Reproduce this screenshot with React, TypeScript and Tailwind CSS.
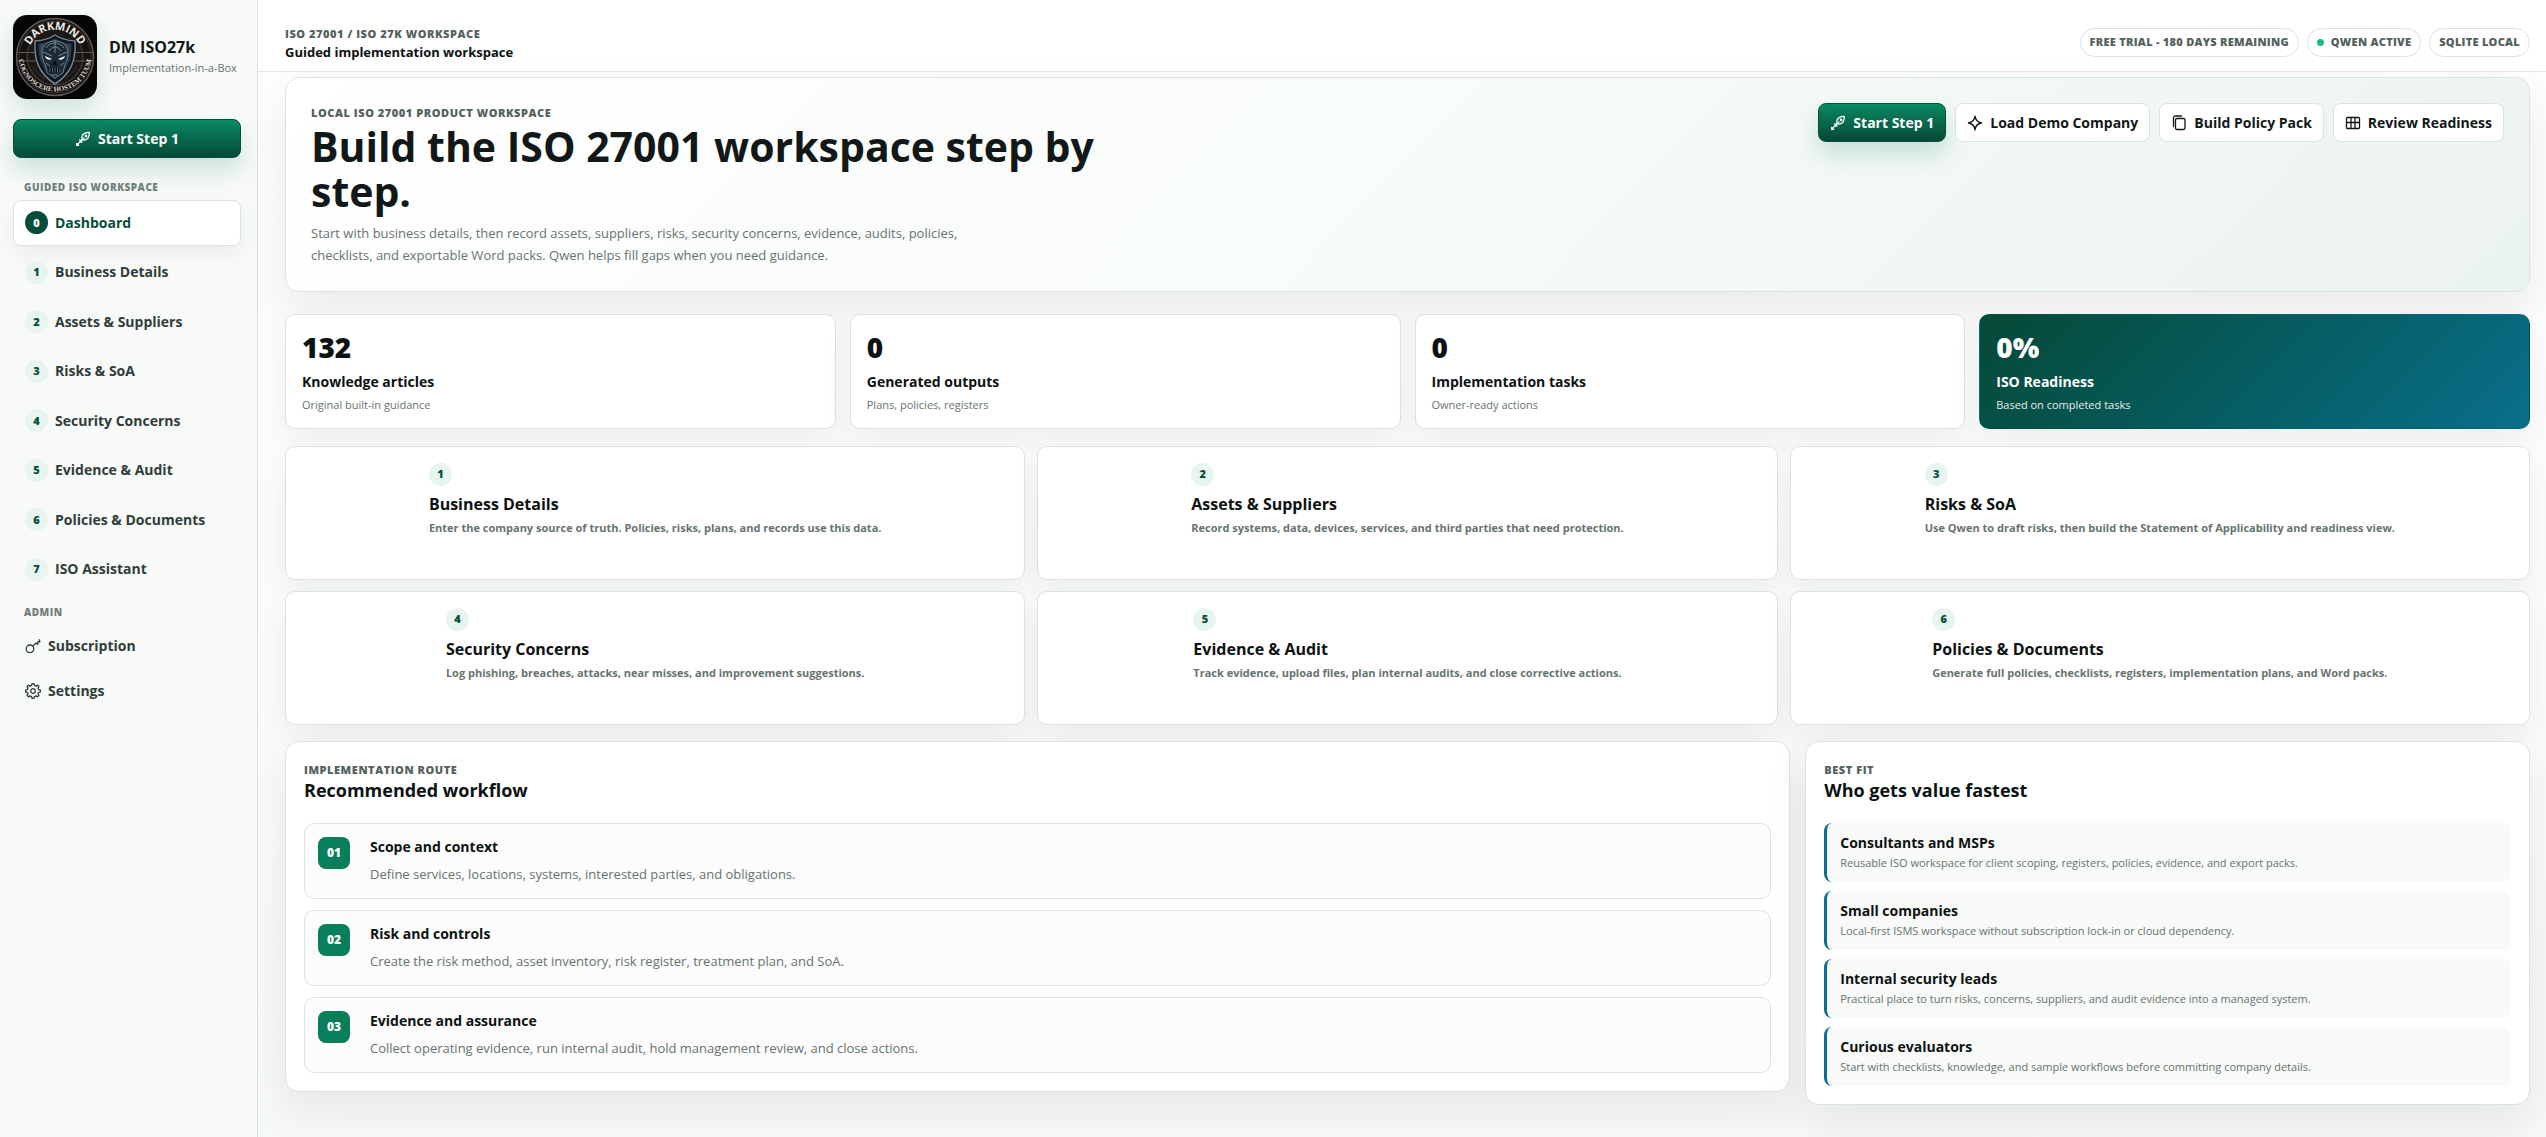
import type { ReactNode } from 'react'
import clsx from 'clsx'

const navItems = [
  'Dashboard',
  'Business Details',
  'Assets & Suppliers',
  'Risks & SoA',
  'Security Concerns',
  'Evidence & Audit',
  'Policies & Documents',
  'ISO Assistant',
]

const stats = [
  { value: '132', label: 'Knowledge articles', note: 'Original built-in guidance' },
  { value: '0', label: 'Generated outputs', note: 'Plans, policies, registers' },
  { value: '0', label: 'Implementation tasks', note: 'Owner-ready actions' },
  { value: '0%', label: 'ISO Readiness', note: 'Based on completed tasks', accent: true },
]

const steps = [
  { title: 'Business Details', text: 'Enter the company source of truth. Policies, risks, plans, and records use this data.' },
  { title: 'Assets & Suppliers', text: 'Record systems, data, devices, services, and third parties that need protection.' },
  { title: 'Risks & SoA', text: 'Use Qwen to draft risks, then build the Statement of Applicability and readiness view.' },
  { title: 'Security Concerns', text: 'Log phishing, breaches, attacks, near misses, and improvement suggestions.' },
  { title: 'Evidence & Audit', text: 'Track evidence, upload files, plan internal audits, and close corrective actions.' },
  { title: 'Policies & Documents', text: 'Generate full policies, checklists, registers, implementation plans, and Word packs.' },
]

const workflow = [
  { title: 'Scope and context', text: 'Define services, locations, systems, interested parties, and obligations.' },
  { title: 'Risk and controls', text: 'Create the risk method, asset inventory, risk register, treatment plan, and SoA.' },
  { title: 'Evidence and assurance', text: 'Collect operating evidence, run internal audit, hold management review, and close actions.' },
]

const audiences = [
  { title: 'Consultants and MSPs', text: 'Reusable ISO workspace for client scoping, registers, policies, evidence, and export packs.' },
  { title: 'Small companies', text: 'Local-first ISMS workspace without subscription lock-in or cloud dependency.' },
  { title: 'Internal security leads', text: 'Practical place to turn risks, concerns, suppliers, and audit evidence into a managed system.' },
  { title: 'Curious evaluators', text: 'Start with checklists, knowledge, and sample workflows before committing company details.' },
]

function Icon({ children }: { children: ReactNode }) {
  return (
    <svg
      viewBox="0 0 16 16"
      className="size-4 shrink-0"
      fill="none"
      stroke="currentColor"
      strokeWidth="1.3"
      strokeLinecap="round"
      strokeLinejoin="round"
      aria-hidden="true"
    >
      {children}
    </svg>
  )
}

function LaunchIcon() {
  return (
    <Icon>
      <path d="M14.3 1.4C10.400 1.500 7.800 2.600 7 5.200c-.3 1-.2 2 .1 3.600 1.700.3 2.700.3 3.700-.1 2.600-1 3.500-3.600 3.500-7.300z" />
      <circle cx="11" cy="4.900" r=".7" />
      <path d="M9 6.900 3 12.900M4.800 8.700l.3 2M5 10.900l2 .2" />
      <path d="M1.700 14.400v-2l1.900 1.900z" fill="currentColor" />
    </Icon>
  )
}

function SparkIcon() {
  return (
    <Icon>
      <path d="M8 1.2c.5 4 2.3 6.2 6.6 6.8-4.300.6-6.100 2.800-6.600 6.800-.5-4-2.300-6.200-6.600-6.800C5.700 7.400 7.500 5.200 8 1.200z" />
    </Icon>
  )
}

function PackIcon() {
  return (
    <Icon>
      <rect x="4.5" y="3.5" width="9.5" height="11" rx="1.5" />
      <path d="M2.5 11.5V3a2 2 0 0 1 2-2h6" />
    </Icon>
  )
}

function GridIcon() {
  return (
    <Icon>
      <rect x="1.5" y="2.5" width="13" height="11" rx="1" />
      <path d="M1.5 7.5h13M6 2.5v11M10 2.5v11" />
    </Icon>
  )
}

function KeyIcon() {
  return (
    <Icon>
      <circle cx="5" cy="10.8" r="3.8" />
      <path d="M7.8 8.1 11 5l1.7 1.3.4-2.7 1.8.2-.7-2" />
    </Icon>
  )
}

// eight teeth, each one drawn as two outer and two inner points
const gearPoints = Array.from({ length: 8 }, (_, i) =>
  [[-14, 5.7], [-8, 7.4], [8, 7.4], [14, 5.7]].map(([offset, r]) => {
    const a = ((i * 45 + offset) * Math.PI) / 180
    return `${(8 + r * Math.cos(a)).toFixed(2)},${(8 + r * Math.sin(a)).toFixed(2)}`
  }),
).flat().join(' ')

function GearIcon() {
  return (
    <Icon>
      <polygon points={gearPoints} />
      <circle cx="8" cy="8" r="2.3" />
    </Icon>
  )
}

function Logo() {
  return (
    <svg
      viewBox="0 0 84 84"
      role="img"
      aria-label="Darkmind"
      className="size-[84px] shrink-0 rounded-[14px] shadow-[0_10px_24px_rgba(8,127,91,0.18)]"
    >
      <defs>
        <path id="logo-top" d="M15 37a27.500 27.500 0 0 1 54 0" />
        <path id="logo-bottom" d="M6 46a36.500 36.500 0 0 0 72 0" />
        <linearGradient id="logo-shield" x1="0" y1="0" x2="0" y2="1">
          <stop offset="0" stopColor="#3a4d5c" />
          <stop offset="1" stopColor="#15202a" />
        </linearGradient>
      </defs>
      <rect width="84" height="84" fill="#050505" />
      <circle cx="42" cy="42" r="38.5" fill="#15110f" stroke="#5d5a57" strokeWidth="1.5" />
      <circle cx="42" cy="42" r="36" fill="none" stroke="#2c2927" strokeWidth="1.5" />
      <circle cx="42" cy="42" r="28" fill="#1b1715" stroke="#4b4744" />
      <path d="M4 37.5h19M61 37.5h19M4 46h19M61 46h19" stroke="#5d5a57" />
      <path d="M18 54c3 7 9 12 16 15M66 54c-3 7-9 12-16 15M20 51c3 6 7 10 12 13M64 51c-3 6-7 10-12 13" fill="none" stroke="#3d3835" />
      <path d="M42 20c6 4 12 5.5 20 6 1 18-3 32-20 43-17-11-21-25-20-43 8-.5 14-2 20-6z" fill="#0d151c" stroke="#6f8592" strokeWidth="1.5" />
      <path d="M42 24c5 3 10 4.500 16 5 .5 14-3 26-16 35-13-9-16.500-21-16-35 6-.5 11-2 16-5z" fill="url(#logo-shield)" stroke="#2a3a46" />
      <path d="M29 38c0-8 6-12 13-12s13 4 13 12c0 4-1 8-3 11l-2 9-8 5-8-5-2-9c-2-3-3-7-3-11z" fill="#1d2b36" stroke="#8ba0ad" strokeWidth=".7" />
      <path d="M33 33c3-4 6-5 9-5s6 1 9 5M36 36c2-3 4-4 6-4s4 1 6 4M42 26v12M30 37l9 4M54 37l-9 4" fill="none" stroke="#7c929f" strokeWidth=".9" />
      <path d="m32 41 7 3c-2.500 1.500-6 .8-7-3zM52 41l-7 3c2.500 1.500 6 .8 7-3z" fill="#fff" />
      <path d="m42 45-2 5h4zM35 53h14l-2 4H37z" fill="#05090c" />
      <path d="M37 53v4M39.5 53v4M42 53v4M44.5 53v4M47 53v4M33 48l4 3M51 48l-4 3M39 60h6" stroke="#8ba0ad" strokeWidth=".7" />
      <text fill="#ece8e2" fontSize="11" fontWeight="700" className="font-['Open_Sans',sans-serif]">
        <textPath href="#logo-top" startOffset="50%" textAnchor="middle">DARKMIND</textPath>
      </text>
      <text fill="#ddd8d1" fontSize="7" fontWeight="700" className="font-['Liberation_Serif',serif]">
        <textPath href="#logo-bottom" startOffset="50%" textAnchor="middle">COGNOSCERE HOSTEM TUUM</textPath>
      </text>
    </svg>
  )
}

function Button({ primary, className, children }: { primary?: boolean; className?: string; children: ReactNode }) {
  return (
    <button
      type="button"
      className={clsx(
        'flex h-[39px] items-center justify-center gap-[7px] rounded-lg border px-[11px] text-sm font-bold',
        primary
          ? 'border-[#064e3b] bg-linear-to-b from-[#0a8a63] to-[#064936] text-white shadow-[0_12px_24px_rgba(8,127,91,0.2)]'
          : 'border-[#d9e3df] bg-white text-[#111817]',
        className,
      )}
    >
      {children}
    </button>
  )
}

function Chip({ children }: { children: ReactNode }) {
  return (
    <span className="flex h-[29px] items-center gap-[7px] rounded-full border border-[#d9e3df] bg-white px-[9px] text-[11px] font-extrabold tracking-wide text-[#52615c]">
      {children}
    </span>
  )
}

function Eyebrow({ children }: { children: ReactNode }) {
  return <p className="text-[11px] leading-5 font-extrabold tracking-wider text-[#52615c] uppercase">{children}</p>
}

function NumberBadge({ n, active }: { n: number; active?: boolean }) {
  return (
    <span
      className={clsx(
        'flex size-[23px] shrink-0 items-center justify-center rounded-full text-[11px] font-extrabold',
        active ? 'bg-[#064e3b] text-white' : 'bg-[#e7f4ef] text-[#064e3b]',
      )}
    >
      {n}
    </span>
  )
}

function Sidebar() {
  return (
    <aside className="w-[258px] shrink-0 border-r border-[#d9e3df] bg-[#f8faf8] pt-[15px] pr-4 pl-[13px]">
      <div className="flex items-center gap-3">
        <Logo />
        <div className="whitespace-nowrap">
          <p className="text-base leading-[22px] font-bold text-[#111817]">DM ISO27k</p>
          <p className="text-[11px] leading-5 text-[#66736f]">Implementation-in-a-Box</p>
        </div>
      </div>

      <Button primary className="mt-5 w-full">
        <LaunchIcon /> Start Step 1
      </Button>

      <p className="mt-[21px] pl-[11px] text-[10px] leading-4 font-extrabold tracking-wider text-[#6f807a]">GUIDED ISO WORKSPACE</p>
      <nav className="mt-[5px] grid h-[392px] auto-rows-fr gap-1">
        {navItems.map((item, i) => (
          <a
            key={item}
            href="#"
            className={clsx(
              'flex items-center gap-[7px] rounded-lg border px-[11px] text-sm font-bold',
              i === 0
                ? 'border-[#d9e3df] bg-white text-[#064e3b] shadow-[0_8px_20px_rgba(20,40,32,0.06)]'
                : 'border-transparent text-[#2f3d39]',
            )}
          >
            <NumberBadge n={i} active={i === 0} />
            {item}
          </a>
        ))}
      </nav>

      <p className="mt-3 pl-[11px] text-[10px] leading-4 font-extrabold tracking-wider text-[#6f807a]">ADMIN</p>
      <nav className="mt-[5px] grid gap-1 text-sm font-bold text-[#2f3d39]">
        <a href="#" className="flex h-[41px] items-center gap-[7px] px-3">
          <KeyIcon /> Subscription
        </a>
        <a href="#" className="flex h-[41px] items-center gap-[7px] px-3">
          <GearIcon /> Settings
        </a>
      </nav>
    </aside>
  )
}

export default function App() {
  return (
    <div className="flex min-h-screen bg-linear-to-b from-[#fdfefd] to-[#f7f9f7] font-['Open_Sans','Noto_Sans',sans-serif] text-[#0c1211]">
      <Sidebar />

      <div className="min-w-0 flex-1">
        <header className="flex h-[72px] items-center justify-between border-b border-[#e2e8e5] bg-white pt-[14px] pr-4 pl-[27px]">
          <div>
            <p className="text-[11px] leading-[18px] font-extrabold tracking-wider text-[#52615c]">ISO 27001 / ISO 27K WORKSPACE</p>
            <p className="text-[13px] leading-[18px] font-bold">Guided implementation workspace</p>
          </div>
          <div className="flex gap-2">
            <Chip>FREE TRIAL - 180 DAYS REMAINING</Chip>
            <Chip>
              <span className="size-[7px] rounded-full bg-[#1fb886]" /> QWEN ACTIVE
            </Chip>
            <Chip>SQLITE LOCAL</Chip>
          </div>
        </header>

        <main className="pt-[5px] pr-4 pb-8 pl-[27px]">
          <section className="flex items-start justify-between gap-6 rounded-[14px] border border-[#d9e3df] bg-linear-135 from-white via-[#f7fbf9] to-[#ebf3ef] p-[25px] shadow-[0_18px_44px_rgba(20,30,26,0.08)]">
            <div>
              <Eyebrow>Local ISO 27001 product workspace</Eyebrow>
              <h1 className="mt-px max-w-[820px] text-[41px] leading-[45px] font-bold text-[#111817]">
                Build the ISO 27001 workspace step by step.
              </h1>
              <p className="mt-2 max-w-[680px] text-[13px] leading-[22px] text-[#66736f]">
                Start with business details, then record assets, suppliers, risks, security concerns, evidence, audits, policies,
                checklists, and exportable Word packs. Qwen helps fill gaps when you need guidance.
              </p>
            </div>
            <div className="flex gap-[9px]">
              <Button primary>
                <LaunchIcon /> Start Step 1
              </Button>
              <Button>
                <SparkIcon /> Load Demo Company
              </Button>
              <Button>
                <PackIcon /> Build Policy Pack
              </Button>
              <Button>
                <GridIcon /> Review Readiness
              </Button>
            </div>
          </section>

          <section className="mt-[22px] grid grid-cols-4 gap-[14px]">
            {stats.map((s) => (
              <article
                key={s.label}
                className={clsx(
                  'rounded-[10px] border px-4 pt-4 pb-[14px] shadow-[0_12px_30px_rgba(20,30,26,0.06)]',
                  s.accent ? 'border-transparent bg-linear-135 from-[#064936] to-[#0a6f8c] text-white' : 'border-[#d9e3df] bg-white',
                )}
              >
                <p className="text-[28px] leading-8 font-extrabold">{s.value}</p>
                <p className="mt-2 text-sm leading-[22px] font-bold">{s.label}</p>
                <p className={clsx('mt-[3px] text-[11px] leading-[18px]', s.accent ? 'text-white/90' : 'text-[#66736f]')}>{s.note}</p>
              </article>
            ))}
          </section>

          <section className="mt-[17px] grid grid-cols-3 gap-x-3 gap-y-[11px]">
            {steps.map((s, i) => (
              <button
                key={s.title}
                type="button"
                className="flex h-[134px] flex-col items-center rounded-[10px] border border-[#d9e3df] bg-white px-4 pt-4 text-left shadow-[0_12px_30px_rgba(20,30,26,0.06)]"
              >
                <span className="block">
                  <NumberBadge n={i + 1} />
                  <span className="mt-[7px] block text-base leading-[22px] font-bold">{s.title}</span>
                  <span className="mt-1 block text-[11px] leading-[18px] font-bold text-[#66736f]">{s.text}</span>
                </span>
              </button>
            ))}
          </section>

          <section className="mt-4 grid grid-cols-[27fr_13fr] items-start gap-[15px]">
            <article className="rounded-[14px] border border-[#d9e3df] bg-white p-[18px] shadow-[0_18px_44px_rgba(20,30,26,0.08)]">
              <Eyebrow>Implementation route</Eyebrow>
              <h2 className="text-lg leading-5 font-bold">Recommended workflow</h2>
              <ol className="mt-[23px] grid gap-[11px]">
                {workflow.map((w, i) => (
                  <li key={w.title} className="flex gap-5 rounded-[10px] border border-[#d9e3df] bg-[#fbfcfb] p-[13px]">
                    <span className="flex size-8 shrink-0 items-center justify-center rounded-lg bg-[#087f5b] text-xs font-extrabold text-white">
                      0{i + 1}
                    </span>
                    <div>
                      <h3 className="text-sm leading-5 font-bold">{w.title}</h3>
                      <p className="mt-1.5 text-[13px] leading-[22px] text-[#66736f]">{w.text}</p>
                    </div>
                  </li>
                ))}
              </ol>
            </article>

            <article className="rounded-[14px] border border-[#d9e3df] bg-white p-[18px] shadow-[0_18px_44px_rgba(20,30,26,0.08)]">
              <Eyebrow>Best fit</Eyebrow>
              <h2 className="text-lg leading-5 font-bold">Who gets value fastest</h2>
              <ul className="mt-[23px] grid gap-[9px]">
                {audiences.map((a) => (
                  <li key={a.title} className="rounded-lg border-l-[3px] border-[#0a6f8c] bg-[#f8faf8] px-[13px] py-2.5">
                    <h3 className="text-sm leading-5 font-bold">{a.title}</h3>
                    <p className="mt-px text-[11px] leading-[18px] text-[#66736f]">{a.text}</p>
                  </li>
                ))}
              </ul>
            </article>
          </section>
        </main>
      </div>
    </div>
  )
}
